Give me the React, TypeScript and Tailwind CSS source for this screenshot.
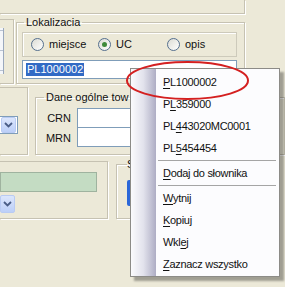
import React from "react";

const line = "border-[#c6c2b2]";

function Radio({ label, checked }: { label: string; checked?: boolean }) {
    return (
        <div className="flex items-center">
            <span className="flex h-[13px] w-[13px] items-center justify-center rounded-full border border-[#55708f] bg-gradient-to-br from-[#dcdcd4] to-white">
                {checked && <span className="h-[5px] w-[5px] rounded-full bg-[#3f8a3a]" />}
            </span>
            <span className="ml-[5px]">{label}</span>
        </div>
    );
}

function DropButton({ w = 15, h = 16 }: { w?: number; h?: number }) {
    return (
        <div
            className="flex items-center justify-center rounded-[2px] border border-[#b9cbf3] bg-gradient-to-b from-[#dce6fc] to-[#bccff8]"
            style={{ width: w, height: h }}
        >
            <svg width="9" height="6" viewBox="0 0 9 6">
                <path d="M1 1 L4.5 4.5 L8 1" fill="none" stroke="#4a5d86" strokeWidth="1.8" />
            </svg>
        </div>
    );
}

type Item = { pre: string; u: string; post: string } | "sep";

const items: Item[] = [
    { pre: "", u: "P", post: "L1000002" },
    { pre: "P", u: "L", post: "359000" },
    { pre: "PL", u: "4", post: "43020MC0001" },
    { pre: "PL", u: "5", post: "454454" },
    "sep",
    { pre: "", u: "D", post: "odaj do słownika" },
    "sep",
    { pre: "", u: "W", post: "ytnij" },
    { pre: "", u: "K", post: "opiuj" },
    { pre: "Wkl", u: "e", post: "j" },
    { pre: "", u: "Z", post: "aznacz wszystko" },
];

export default function App() {
    return (
        <div className="relative h-[287px] w-[285px] overflow-hidden bg-[#ece9d8] font-['Liberation_Sans',Arial,sans-serif] text-[11px] leading-[13px] text-[#111]">
            {/* dolna krawędź górnej ramki */}
            <div className={`h-[14px] w-[245px] border-r border-b ${line} shadow-[1px_1px_0_#fff]`} />

            <div className="mt-[2px] flex">
                <div className={`mt-[3px] h-[65px] w-[14px] border-t border-r border-b ${line} shadow-[1px_1px_0_#fff]`}>
                    <div className="mt-[8px] flex h-[46px] w-[4px] flex-col border-r border-[#9aa8bd] bg-[#f4f6fa]">
                        <div className="h-[3px] border-b border-[#b8c2d2]" />
                        <div className="h-[20px] border-b border-[#b8c2d2]" />
                        <div className="h-[20px] border-b border-[#b8c2d2]" />
                    </div>
                </div>

                <fieldset className={`ml-[2px] w-[229px] border ${line} pl-[5px] pb-[4px] shadow-[inset_1px_1px_0_#fff,1px_1px_0_#fff]`}>
                    <legend className="ml-[2px] px-[2px]">Lokalizacia</legend>
                    <div className="mt-[3px] flex h-[25px] w-[215px] items-center border border-[#cdcabb] pl-[8px] shadow-[inset_1px_1px_0_#fff]">
                        <div className="w-[67px]">
                            <Radio label="miejsce" />
                        </div>
                        <div className="w-[69px]">
                            <Radio label="UC" checked />
                        </div>
                        <Radio label="opis" />
                    </div>
                    <div className="mt-[3px] flex h-[19px] w-[215px] items-center border border-[#7f9db9] bg-white pl-[3px]">
                        <span className="bg-[#316ac5] px-px text-white">PL1000002</span>
                    </div>
                </fieldset>
            </div>

            <div className="mt-[3px] flex">
                <div className={`h-[68px] w-[28px] border-t border-r border-b ${line} shadow-[1px_1px_0_#fff]`}>
                    <div className="mt-[28px] flex h-[18px] w-[18px] items-center border-y border-r border-[#7f9db9] bg-white pl-px">
                        <DropButton />
                    </div>
                </div>

                <fieldset className={`mt-[4px] ml-[7px] h-[64px] w-[250px] border ${line} pl-[6px] shadow-[inset_1px_1px_0_#fff,1px_1px_0_#fff]`}>
                    <legend className="ml-[2px] px-[2px]">Dane ogólne tow</legend>
                    <div className="mt-[4px] flex">
                        <div className="flex w-[29px] flex-col items-end">
                            <span className="flex h-[20px] items-center">CRN</span>
                            <span className="flex h-[20px] items-center">MRN</span>
                        </div>
                        <div className="ml-[6px] flex flex-col">
                            <div className="h-[20px] w-[200px] border border-[#7f9db9] bg-white" />
                            <div className="-mt-px h-[20px] w-[200px] border border-[#7f9db9] bg-white" />
                        </div>
                    </div>
                </fieldset>
            </div>

            <div className="flex">
                <div className={`mt-[6px] h-[58px] w-[108px] border-t border-r border-b ${line} shadow-[1px_1px_0_#fff]`}>
                    <div className="mt-[10px] h-[20px] w-[97px] border border-[#9fb39f] bg-[#c4dcc3]" />
                    <div className="mt-[3px]">
                        <DropButton w={15} h={18} />
                    </div>
                </div>

                <fieldset className={`mt-[3px] ml-[8px] h-[61px] w-[150px] border ${line} pl-[10px] shadow-[inset_1px_1px_0_#fff,1px_1px_0_#fff]`}>
                    <legend className="px-0">S</legend>
                    <div className="mt-[9px] h-[26px] w-[40px] rounded-[2px] bg-gradient-to-r from-[#2a66d8] to-[#4a86ea]" />
                </fieldset>
            </div>

            {/* menu kontekstowe */}
            <div className="absolute left-[130px] top-[68px] flex h-[209px] w-[150px] border border-[#8c8b87] bg-[#fcfcfe] shadow-[4px_4px_2px_rgba(0,0,0,0.32)]">
                <div className="w-[25px] shrink-0 bg-gradient-to-r from-[#fbfbfd] via-[#e2e2ec] to-[#aeadc4]" />
                <div className="flex flex-1 flex-col pt-[2px]">
                    {items.map((it, i) =>
                        it === "sep" ? (
                            <div key={i} className="flex h-[3px] items-center pl-[2px] pr-[3px]">
                                <div className="h-px w-full bg-[#a5a5a5]" />
                            </div>
                        ) : (
                            <div key={i} className="flex h-[22px] items-center pl-[7px] text-[11px] tracking-[-0.3px]">
                                {it.pre}
                                <span className="underline decoration-1 underline-offset-[2px]">{it.u}</span>
                                {it.post}
                            </div>
                        )
                    )}
                </div>
            </div>

            {/* czerwona obwódka */}
            <svg className="pointer-events-none absolute left-0 top-0" width="285" height="287">
                <ellipse cx="187.5" cy="80.5" rx="60.5" ry="18.5" fill="none" stroke="#d42020" strokeWidth="2" />
            </svg>
        </div>
    );
}
